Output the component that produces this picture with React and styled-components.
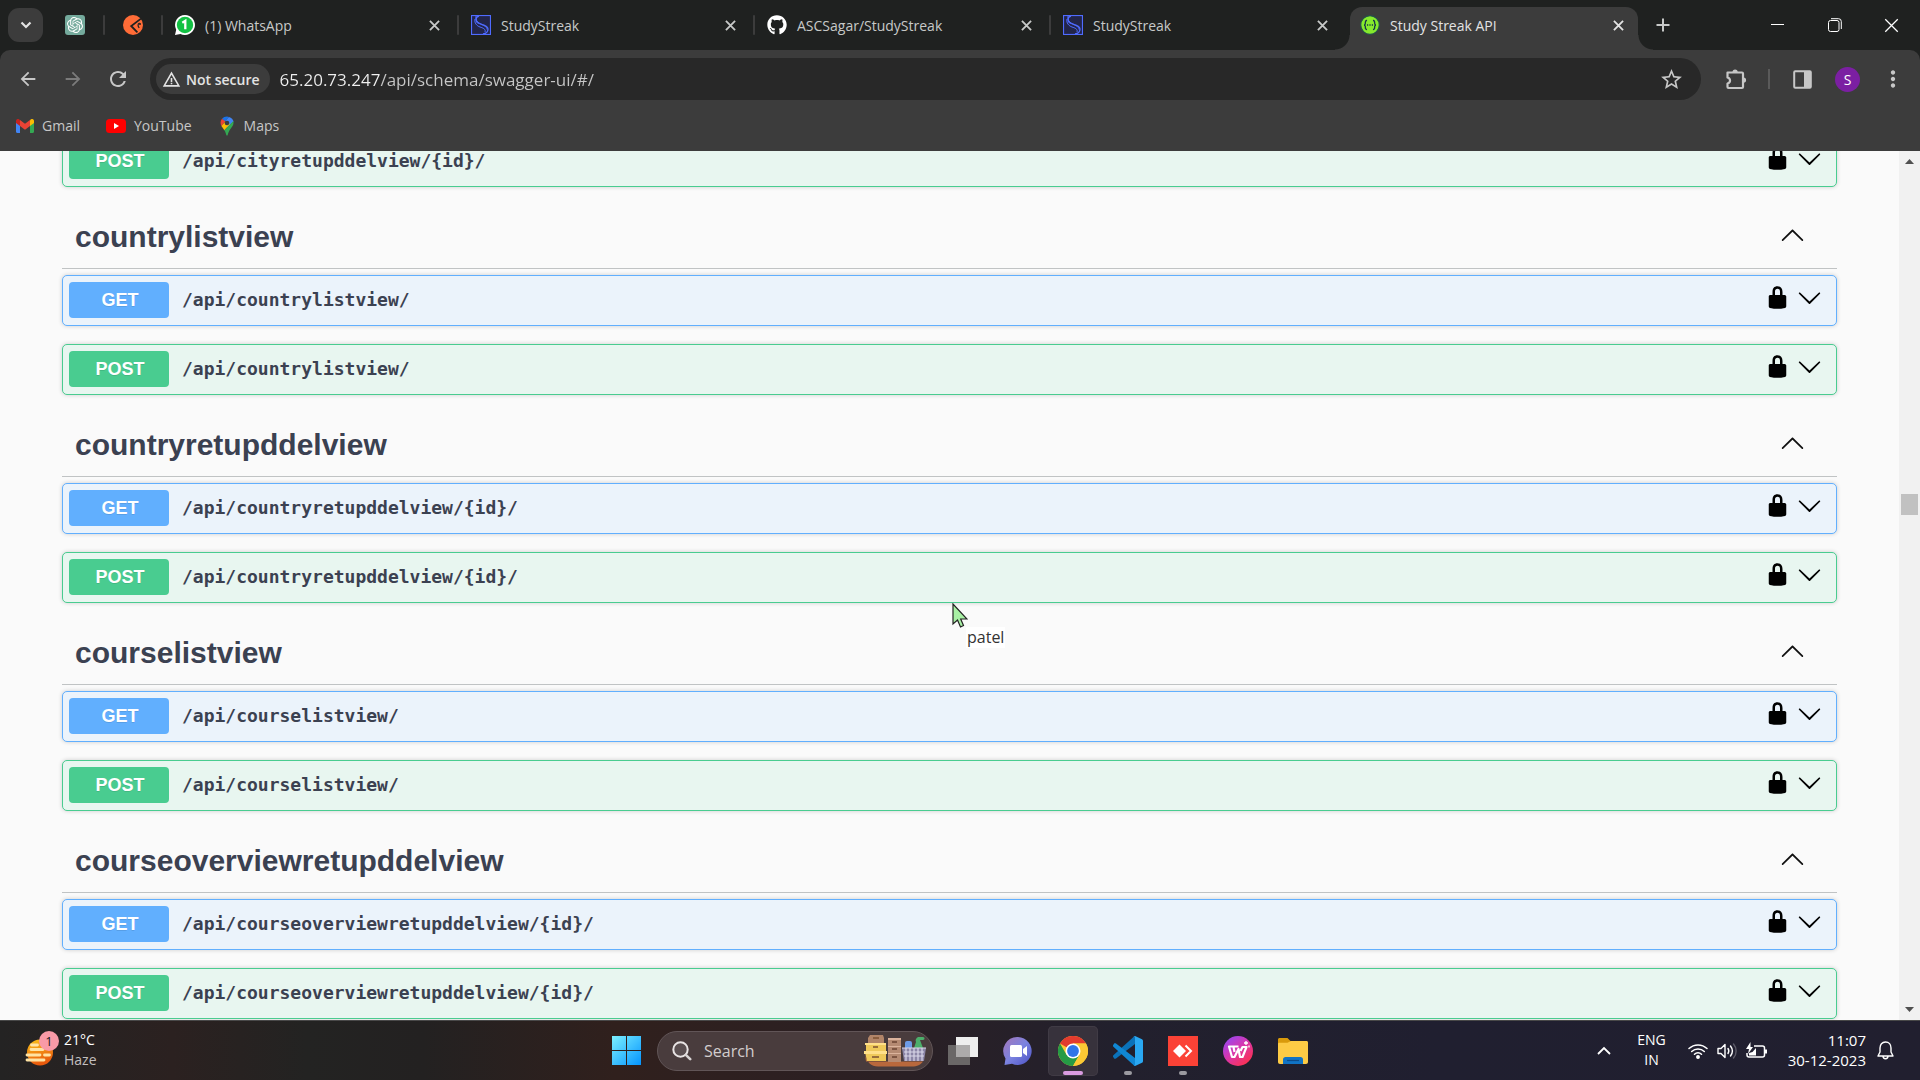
import React from 'react';
import styled, { createGlobalStyle, css } from 'styled-components';
import { FaGithub } from 'react-icons/fa';
import { SiOpenai } from 'react-icons/si';
import { MdArrowBack, MdArrowForward, MdRefresh, MdStarBorder, MdMoreVert, MdWarningAmber } from 'react-icons/md';

const UI_FONT = '"Open Sans", "Noto Sans", sans-serif';
const METHOD_COLORS = { GET: '#61affe', POST: '#49cc90' };
const METHOD_TINTS = { GET: '#ebf3fb', POST: '#e8f6f0' };

const GlobalStyle = createGlobalStyle`
  *, *::before, *::after { box-sizing: border-box; }
  body { margin: 0; overflow: hidden; background: #fafafa; font-family: ${UI_FONT}; }
  button { border: 0; padding: 0; background: none; color: inherit; font: inherit; }
  input { border: 0; padding: 0; background: none; font: inherit; outline: 0; }
  a { color: inherit; text-decoration: none; }
  svg { display: block; flex: none; }
`;

const Screen = styled.div`
  display: flex;
  flex-direction: column;
  height: 100vh;
`;

/* ---------- Browser chrome ---------- */

const TabStrip = styled.nav`
  display: flex;
  align-items: stretch;
  height: 50px;
  padding-left: 8px;
  background: #1f2120;
  color: #c7c9c8;
  font-size: 14px;
`;

const TabSearch = styled.button`
  display: grid;
  place-items: center;
  align-self: center;
  width: 35px;
  height: 34px;
  margin-right: 4px;
  border-radius: 11px;
  background: #3c3c3c;
  color: #e3e3e3;
`;

const Separator = styled.span`
  flex: none;
  align-self: center;
  width: 2px;
  height: 20px;
  border-radius: 1px;
  background: ${(p) => (p.$hidden ? 'transparent' : '#3c3c3c')};
`;

const PinnedTab = styled.button`
  display: flex;
  align-items: center;
  gap: 18px;
  padding-left: 18px;
`;

const Tab = styled.div`
  display: flex;
  align-items: center;
  flex: 0 1 296px;
  min-width: 0;
  padding-left: 12px;
  ${(p) =>
    p.$active &&
    css`
      position: relative;
      flex-basis: 288px;
      margin: 7px 0 0 3px;
      padding: 0 10px 7px;
      border-radius: 12px 12px 0 0;
      background: #3c3c3c;
      color: #e3e3e3;
      &::before,
      &::after {
        content: '';
        position: absolute;
        bottom: 0;
        width: 15px;
        height: 15px;
      }
      &::before {
        right: 100%;
        background: radial-gradient(circle at 0 0, transparent 14px, #3c3c3c 15px);
      }
      &::after {
        left: 100%;
        background: radial-gradient(circle at 100% 0, transparent 14px, #3c3c3c 15px);
      }
    `}
`;

const TabLink = styled.a`
  display: flex;
  align-items: center;
  gap: 10px;
  flex: 1;
  min-width: 0;
  white-space: nowrap;
  line-height: 20px;
`;

const TabTitle = styled.span`
  padding-top: 2px;
`;

const TabClose = styled.button`
  display: grid;
  place-items: center;
  width: 20px;
  height: 20px;
  margin-right: ${(p) => (p.$active ? 0 : 13)}px;
`;

const NewTab = styled.button`
  display: grid;
  place-items: center;
  width: 50px;
`;

const WindowControls = styled.div`
  display: flex;
  margin-left: auto;
  color: #fff;
`;

const WindowButton = styled.button`
  display: grid;
  place-items: center;
  width: 57px;
`;

const ToolbarBack = styled.div`
  background: #1f2120;
`;

const Toolbar = styled.div`
  display: flex;
  align-items: center;
  height: 58px;
  padding: 0 5px;
  border-radius: 10px 10px 0 0;
  background: #3c3c3c;
  color: #c7c7c7;
`;

const NavButton = styled.button`
  display: grid;
  place-items: center;
  width: 45px;
  height: 40px;
  color: ${(p) => (p.$dim ? '#7b7b7b' : '#c7c7c7')};
`;

const Omnibox = styled.form`
  display: flex;
  align-items: center;
  flex: 1;
  height: 42px;
  margin: 0 12px 0 10px;
  padding: 0 17px 0 6px;
  border-radius: 21px;
  background: #282828;
`;

const SecurityChip = styled.button`
  display: flex;
  align-items: center;
  gap: 5px;
  height: 30px;
  padding: 0 10px 0 6px;
  border-radius: 15px;
  background: #3c3c3c;
  color: #e3e3e3;
  font-size: 14px;
  font-weight: 600;
  white-space: nowrap;
`;

const Address = styled.input`
  flex: 1;
  min-width: 0;
  height: 30px;
  margin-left: 10px;
  color: #c7c7c7;
  font-size: 17px;
  background: linear-gradient(to right, #f0f0f0 101px, #c7c7c7 101px);
  background-clip: text;
  -webkit-text-fill-color: transparent;
`;

const ToolButton = styled.button`
  display: grid;
  place-items: center;
  width: 45px;
  height: 40px;
`;

const ToolDivider = styled.span`
  width: 2px;
  height: 20px;
  margin: 0 10px;
  background: #5a5a5a;
`;

const Avatar = styled.span`
  display: grid;
  place-items: center;
  width: 25px;
  height: 25px;
  border-radius: 50%;
  background: #7b1fa2;
  color: #fff;
  font-size: 14px;
`;

const Bookmarks = styled.nav`
  display: flex;
  align-items: center;
  gap: 26px;
  height: 43px;
  padding: 0 16px 7px;
  background: #3c3c3c;
  color: #c7c7c7;
  font-size: 14px;
`;

const Bookmark = styled.a`
  display: flex;
  align-items: center;
  gap: 8px;
  line-height: 20px;
`;

/* ---------- Page ---------- */

const Viewport = styled.div`
  display: flex;
  flex: 1;
  min-height: 0;
  overflow: hidden;
`;

const Page = styled.main`
  flex: 1;
  min-width: 0;
  padding: 0 62px;
  overflow: hidden;
  color: #3b4151;
`;

const Operations = styled.div`
  display: flex;
  flex-direction: column;
  gap: 18px;
  padding-bottom: 18px;
  ${(p) => p.$scrolled && 'margin-top: -15px;'}
`;

const SectionHeader = styled.header`
  display: flex;
  align-items: center;
  justify-content: space-between;
  height: 64px;
  margin-bottom: 6px;
  padding: 0 32px 0 13px;
  border-bottom: 1px solid #c0c3c4;
`;

const SectionTitle = styled.h3`
  margin: 0;
  font: bold 30px/36px "Liberation Sans", Arial, sans-serif;
`;

const SectionToggle = styled.button`
  padding-bottom: 4px;
  color: #111;
`;

const Operation = styled.article`
  display: flex;
  align-items: center;
  padding: 6px 14px 7px 6px;
  border: 1px solid ${(p) => METHOD_COLORS[p.$method]};
  border-radius: 5px;
  background: ${(p) => METHOD_TINTS[p.$method]};
  box-shadow: 0 0 4px rgba(0, 0, 0, 0.19);
`;

const Summary = styled.button`
  display: flex;
  align-items: center;
  gap: 13px;
  flex: 1;
  min-width: 0;
  text-align: left;
`;

const Method = styled.span`
  width: 100px;
  padding-left: 2px;
  border-radius: 4px;
  background: ${(p) => METHOD_COLORS[p.$method]};
  color: #fff;
  font: bold 18px/36px "Liberation Sans", Arial, sans-serif;
  text-align: center;
  text-shadow: 0 1px 0 rgba(0, 0, 0, 0.1);
`;

const Path = styled.span`
  font: bold 18px/36px "DejaVu Sans Mono", monospace;
`;

const Actions = styled.div`
  display: flex;
  align-self: flex-start;
  gap: 7px;
  padding-top: 3px;
  color: #000;
`;

const Scrollbar = styled.div`
  display: flex;
  flex-direction: column;
  align-items: center;
  width: 21px;
  background: #f1f1f1;
  color: #505050;
`;

const ScrollArrow = styled.button`
  display: grid;
  place-items: center;
  width: 21px;
  height: 21px;
`;

const ScrollSpace = styled.span`
  flex: ${(p) => p.$share};
`;

const ScrollThumb = styled.span`
  width: 17px;
  height: 21px;
  background: #c1c1c1;
`;

const Pointer = styled.div`
  position: absolute;
  left: 952px;
  top: 603px;
`;

const PointerName = styled.span`
  position: absolute;
  left: 14px;
  top: 24px;
  padding: 0 1px;
  background: #fff;
  color: #333;
  font-size: 16px;
  line-height: 21px;
`;

/* ---------- Taskbar ---------- */

const Taskbar = styled.footer`
  display: grid;
  grid-template-columns: 1fr auto 1fr;
  align-items: center;
  height: 60px;
  border-top: 1px solid #484848;
  background: linear-gradient(to right, #242323 0%, #2b2120 9%, #232322 16%, #232121 22%, #30201d 32%, #2b2024 46%, #22202d 58%, #201f30 75%, #211f2f 100%);
  color: #fff;
  font-size: 14px;
  line-height: 20px;
`;

const Weather = styled.button`
  display: flex;
  align-items: center;
  justify-self: start;
  gap: 4px;
  padding: 0 0 2px 24px;
  text-align: left;
`;

const WeatherText = styled.span`
  display: flex;
  flex-direction: column;
`;

const Muted = styled.span`
  color: #c2bfbf;
`;

const Apps = styled.div`
  display: flex;
  align-items: center;
  gap: 5px;
`;

const AppButton = styled.button`
  position: relative;
  display: grid;
  place-items: center;
  width: 50px;
  height: 50px;
  border-radius: 5px;
  ${(p) => p.$active && 'background: #37323c; box-shadow: inset 0 0 0 1px #403b45;'}
`;

const RunningMark = styled.span`
  position: absolute;
  bottom: 1px;
  left: 50%;
  width: ${(p) => (p.$active ? 20 : 8)}px;
  height: 4px;
  margin-left: ${(p) => (p.$active ? -10 : -4)}px;
  border-radius: 2px;
  background: ${(p) => (p.$active ? '#d99be0' : '#9b9aa0')};
`;

const SearchBox = styled.label`
  display: flex;
  align-items: center;
  gap: 12px;
  width: 276px;
  height: 40px;
  padding: 0 6px 0 14px;
  border: 1px solid #615557;
  border-radius: 20px;
  background: #493c3d;
`;

const SearchInput = styled.input`
  flex: 1;
  min-width: 0;
  font-size: 16px;
  color: #d2cdcd;
  &::placeholder { color: #d2cdcd; opacity: 1; }
`;

const Tray = styled.div`
  display: flex;
  align-items: center;
  justify-self: end;
  padding-right: 26px;
`;

const TrayButton = styled.button`
  display: flex;
  align-items: center;
  justify-content: center;
  gap: 9px;
  margin-right: ${(p) => p.$gap || 0}px;
`;

const Stack = styled.span`
  display: flex;
  flex-direction: column;
  align-items: ${(p) => (p.$clock ? 'flex-end' : 'center')};
  padding-bottom: 2px;
  font-size: ${(p) => (p.$clock ? 15 : 14)}px;
`;

/* ---------- Drawings ---------- */

const Cross = ({ size = 11, weight = 2 }) => (
  <svg width={size} height={size} viewBox="0 0 12 12" fill="none" stroke="currentColor" strokeWidth={weight}>
    <path d="M1 1l10 10M11 1L1 11" />
  </svg>
);

const ChatGptIcon = () => (
  <svg width="20" height="20" viewBox="0 0 20 20">
    <rect width="20" height="20" rx="3" fill="#74aa9c" />
    <SiOpenai x="2" y="2" size={16} color="#fff" />
  </svg>
);

const PostmanIcon = () => (
  <svg width="20" height="20" viewBox="0 0 20 20">
    <circle cx="10" cy="10" r="10" fill="#ff6c37" />
    <path d="M18 3.6L8.2 11l6.2 6.4" fill="none" stroke="#1f2120" strokeWidth="1.8" />
    <path d="M16.6 8c-2 .8-2 3-.4 5" fill="none" stroke="#1f2120" strokeWidth="1.2" />
    <circle cx="17" cy="9" r="1" fill="#1f2120" />
  </svg>
);

const WhatsAppIcon = () => (
  <svg width="20" height="20" viewBox="0 0 20 20">
    <path d="M10 0a10 10 0 1 1-4.6 18.9L0 20l1.2-5.3A10 10 0 0 1 10 0z" fill="#fff" />
    <circle cx="10" cy="10" r="8.2" fill="#12c143" />
    <path d="M7.3 7.7l3-1.9v8.4" fill="none" stroke="#fff" strokeWidth="2.3" />
  </svg>
);

const StreakIcon = () => (
  <svg width="20" height="20" viewBox="0 0 20 20" fill="none" stroke="#4f6bff">
    <rect x=".5" y=".5" width="19" height="19" fill="#22254a" strokeWidth="1.2" />
    <path d="M8 1C4 2 4 7 8 8.500c4 1.400 9 2 9 5.500 0 2.500-2 4.500-5 5" strokeWidth="1.300" />
    <path d="M4 4c-1 4 2 7 5 8s6 2 5 5M5 1c-.5 4 1 6 4 7.500s7 3 7 6" strokeWidth="1" />
  </svg>
);

const SwaggerIcon = () => (
  <svg width="20" height="20" viewBox="0 0 20 20">
    <circle cx="10" cy="10" r="9.300" fill="#85ea2d" stroke="#24504a" strokeWidth="1.200" />
    <g fill="none" stroke="#173647" strokeWidth="1.300">
      <path d="M7 5.500C4.800 5.300 5.600 8 5.200 9c-.2.700-.7 1-1.200 1 .5 0 1 .3 1.200 1 .4 1-.4 3.700 1.800 3.500M13 5.500c2.200-.2 1.400 2.500 1.800 3.500.2.700.7 1 1.200 1-.5 0-1 .3-1.200 1-.4 1 .4 3.700-1.800 3.500" />
      <path d="M7 10h1.200M9.400 10h1.200M11.800 10H13" />
    </g>
  </svg>
);

const GmailIcon = () => (
  <svg width="18" height="14" viewBox="0 0 18 14">
    <path d="M0 2v10.800c0 .7.500 1.200 1.200 1.200H4V5z" fill="#4285f4" />
    <path d="M18 2v10.800c0 .7-.5 1.200-1.200 1.200H14V5z" fill="#34a853" />
    <path d="M14 1.500V7l4-3V2c0-2-2.200-2.600-3.400-1.500z" fill="#fbbc04" />
    <path d="M4 1.500V7L0 4V2C0 0 2.200-.6 3.400.5z" fill="#c5221f" />
    <path d="M4 7V1l5 3.800L14 1v6l-5 3.800z" fill="#ea4335" />
  </svg>
);

const YouTubeIcon = () => (
  <svg width="20" height="14" viewBox="0 0 20 14">
    <rect width="20" height="14" rx="3.500" fill="#f00" />
    <path d="M8 4l5 3-5 3z" fill="#fff" />
  </svg>
);

const MapsIcon = () => (
  <svg width="18" height="20" viewBox="0 0 18 20">
    <path d="M9 .5A6.500 6.500 0 0 0 4 2.800l3 2.700L11 1z" fill="#1a73e8" />
    <path d="M4 2.800C2 5 2.300 8 3.400 10L7.500 5.500z" fill="#ea4335" />
    <path d="M11 .9c2.600.8 4 2.500 4.500 4.600L9 11.800 7.300 5z" fill="#4285f4" />
    <path d="M3.400 10c.8 1.500 2 2.700 3 4.200L12 8 7.500 5.500z" fill="#fbbc04" />
    <path d="M15.400 5c.6 3-.6 5-2.400 7.200C11 14.700 10.300 16.500 9.700 19c-.2.800-1.200.8-1.400 0-.5-2-1-3.300-2-4.800z" fill="#34a853" />
    <circle cx="9" cy="7" r="2.300" fill="#3c3c3c" />
  </svg>
);

const PuzzleIcon = () => (
  <svg width="22" height="22" viewBox="0 0 22 22">
    <path d="M2.500 4.500H17a1 1 0 0 1 1 1V19a1 1 0 0 1-1 1H3.500a1 1 0 0 1-1-1v-3.500c3.400-1 3.400-5 0-6z" fill="none" stroke="currentColor" strokeWidth="2.200" strokeLinejoin="round" />
    <path d="M7.500 4a2.600 2.600 0 0 1 5.200 0zM18.500 9.500a2.600 2.600 0 0 1 0 5.200z" fill="currentColor" />
  </svg>
);

const SidePanelIcon = () => (
  <svg width="19" height="19" viewBox="0 0 19 19">
    <rect x="1.200" y="1.200" width="16.600" height="16.600" rx="1" fill="none" stroke="currentColor" strokeWidth="2" />
    <path d="M11 1h7v17h-7z" fill="currentColor" />
  </svg>
);

const LockIcon = () => (
  <svg width="25" height="25" viewBox="0 0 20 20" fill="currentColor">
    <path d="M15.8 8H14V5.600C14 2.703 12.665 1 10 1 7.334 1 6 2.703 6 5.600V8H4c-.553 0-1 .646-1 1.199V17c0 .549.428 1.139.951 1.307l1.197.387C5.672 18.861 6.550 19 7.100 19h5.800c.549 0 1.428-.139 1.951-.307l1.196-.387c.524-.167.953-.757.953-1.306V9.199C17 8.646 16.352 8 15.800 8zM12 8H8V5.199C8 3.754 8.797 3 10 3c1.203 0 2 .754 2 2.199V8z" />
  </svg>
);

const ArrowIcon = ({ up }) => (
  <svg width="25" height="25" viewBox="0 0 20 20" fill="currentColor">
    <path
      d={
        up
          ? 'M17.418 14.908c.272.268.709.268.979 0s.271-.701 0-.969L10.490 6.109c-.270-.268-.707-.268-.979 0l-7.908 7.830c-.270.268-.270.701 0 .969.271.268.709.268.979 0L10 7.767l7.418 7.141z'
          : 'M17.418 6.109c.272-.268.709-.268.979 0s.271.701 0 .969l-7.908 7.830c-.270.268-.707.268-.979 0l-7.908-7.830c-.270-.268-.270-.701 0-.969.271-.268.709-.268.979 0L10 13.250l7.418-7.141z'
      }
    />
  </svg>
);

const WeatherIcon = () => (
  <svg width="36" height="40" viewBox="0 0 36 40">
    <defs>
      <linearGradient id="sun" x1="0" y1="0" x2="0.300" y2="1">
        <stop offset="0" stopColor="#fcc419" />
        <stop offset="1" stopColor="#e8590c" />
      </linearGradient>
    </defs>
    <circle cx="16" cy="22.500" r="13" fill="url(#sun)" />
    <path d="M7.500 15h6M7 19.500h12M3 25h13M20.500 25h5M3 30h17" stroke="#ffe3a3" strokeWidth="2.800" strokeLinecap="round" />
    <circle cx="25" cy="11" r="10" fill="#f99aa7" />
    <text x="25" y="16" textAnchor="middle" fontSize="13" fill="#1b1b1b" fontFamily="Open Sans, sans-serif">1</text>
  </svg>
);

const WindowsIcon = () => (
  <svg width="30" height="30" viewBox="0 0 30 30">
    <defs>
      <linearGradient id="win" gradientUnits="userSpaceOnUse" x1="0" y1="0" x2="30" y2="30">
        <stop offset="0" stopColor="#7cf0ff" />
        <stop offset="1" stopColor="#0091ff" />
      </linearGradient>
    </defs>
    <path d="M0 0h14v14H0zM15 0h14v14H15zM0 15h14v14H0zM15 15h14v14H15z" fill="url(#win)" />
  </svg>
);

const SearchIcon = () => (
  <svg width="20" height="20" viewBox="0 0 20 20" fill="none" strokeLinecap="round">
    <circle cx="8.500" cy="8.500" r="7.200" stroke="#e8e4e4" strokeWidth="2" fill="#5a4f51" />
    <path d="M13.800 13.800l4.400 4.400" stroke="#d8d4d4" strokeWidth="2.600" />
  </svg>
);

const StorageArt = () => (
  <svg width="62" height="32" viewBox="0 0 62 32">
    <path d="M1 20C3 27 7 31.500 14 31.500h34c5 0 9-2 11-5H2z" fill="#b9683c" />
    <path d="M4 3l2-3h13l1 3v6H4z" fill="#b08468" />
    <path d="M2 9h20v8H2zM1 17h21v9H3z" fill="#efc95a" />
    <path d="M1 8h21v2H1zM0 16h23v3H0z" fill="#ffe08a" />
    <path d="M9 3h6M9 12h5M8 22h7" stroke="#7c5030" strokeWidth="1.500" />
    <path d="M24 3h13v24H24z" fill="#b58a72" />
    <path d="M24 3h13v2H24zM24 11h13v1H24zM24 18h13v1H24z" fill="#dbb39c" />
    <path d="M28 7h5M28 14h5M28 22h5" stroke="#6a4332" strokeWidth="1.300" />
    <rect x="41" y="6" width="7" height="9" rx="2" fill="#6d9be6" />
    <path d="M52 7c-1-2 0-4 2-5h5c2 0 2 3 0 3h-3l3 8h-9z" fill="#4caf6b" />
    <path d="M38 13h24l-2 13H40z" fill="#8b85a6" />
    <path d="M38 13h24M40 17h20M40 21h20M42 13v13M46 13v13M50 13v13M54 13v13M58 13v13" stroke="#d9d6e8" strokeWidth="1.200" />
  </svg>
);

const TaskViewIcon = () => (
  <svg width="30" height="28" viewBox="0 0 30 28">
    <path d="M0 8h22v20H0z" fill="#6a6767" />
    <path d="M8 0h22v20H8z" fill="#eeeeee" />
    <path d="M8 8h14v12H8z" fill="#adabab" />
  </svg>
);

const ChatIcon = () => (
  <svg width="30" height="30" viewBox="0 0 30 30">
    <defs>
      <linearGradient id="chat" x1="0" y1="0" x2="1" y2="1">
        <stop offset="0" stopColor="#a576b8" />
        <stop offset="0.500" stopColor="#7b83e0" />
        <stop offset="1" stopColor="#4b50c4" />
      </linearGradient>
    </defs>
    <path d="M15 1a14 14 0 1 1-6 26.800L1.500 29l1-6.500A14 14 0 0 1 15 1z" fill="url(#chat)" />
    <rect x="7" y="9" width="12" height="12" rx="1.500" fill="#fff" />
    <path d="M20 13l4-3v10l-4-3z" fill="#fff" />
  </svg>
);

const ChromeIcon = () => (
  <svg width="30" height="30" viewBox="0 0 30 30">
    <circle cx="15" cy="15" r="15" fill="#fcc934" />
    <path d="M15 15L2 7.500A15 15 0 0 1 28 7.500H15z" fill="#e33b2e" />
    <path d="M2 7.500A15 15 0 0 0 15 30l6.500-11.300L15 15 8.500 18.700z" fill="#259b45" />
    <path d="M15 7.500h13A15 15 0 0 1 15 30l6.500-11.300z" fill="#fcc934" />
    <circle cx="15" cy="15" r="7.500" fill="#fff" />
    <circle cx="15" cy="15" r="5.900" fill="#2f75e8" />
  </svg>
);

const CodeIcon = () => (
  <svg width="30" height="30" viewBox="0 0 30 30">
    <path d="M22 0v8L3 22.500c-.6.500-1.400.4-1.900 0L.4 21.200c-.6-.6-.5-1.400 0-1.900L21 .5z" fill="#0b72b9" />
    <path d="M22 30v-8L3 7.500c-.6-.5-1.400-.4-1.900 0L.4 8.800c-.6.600-.5 1.400 0 1.900L21 29.500z" fill="#1087d4" />
    <path d="M22 0l7 3.200c.6.300 1 .9 1 1.600v20.400c0 .7-.4 1.300-1 1.600L22 30c-.7.200-1.400 0-2-.4.900.7 2 0 2-1V1.500c0-1-1.200-1.700-2-1 .6-.5 1.300-.7 2-.5z" fill="#2aa8f2" />
  </svg>
);

const AnyDeskIcon = () => (
  <svg width="30" height="30" viewBox="0 0 30 30">
    <path d="M0 0h30v30H0z" fill="#fb4236" />
    <path d="M11.500 8.500L18 15l-6.500 6.500L5 15z" fill="#fff" />
    <path d="M17.500 9.500L23 15l-5.500 5.500" fill="none" stroke="#fff" strokeWidth="2" />
  </svg>
);

const WpsIcon = () => (
  <svg width="30" height="30" viewBox="0 0 30 30">
    <defs>
      <linearGradient id="wps" x1="0" y1="0" x2="0.800" y2="1">
        <stop offset="0" stopColor="#8a4bff" />
        <stop offset="0.500" stopColor="#d636b0" />
        <stop offset="1" stopColor="#ff3048" />
      </linearGradient>
    </defs>
    <circle cx="15" cy="15" r="15" fill="url(#wps)" />
    <path d="M15.500 10.500H6L9 21h2.500l4-8 1.500 8h2.500l4-10h-4l-2 4M10.500 11l1 5" fill="none" stroke="#fff" strokeWidth="2.200" strokeLinejoin="round" />
    <path d="M23 5v4M21 7h4M26 9.500v2" stroke="#fff" strokeWidth="1.300" />
  </svg>
);

const FolderIcon = () => (
  <svg width="30" height="26" viewBox="0 0 30 26">
    <path d="M0 1.500C0 .7.700 0 1.500 0h8l3 3H28v8H0z" fill="#d99a0b" />
    <path d="M0 6c0-.8.500-1.300 1.300-1.300h8.200L13 3h15.500c.9 0 1.500.6 1.500 1.500V24c0 1.200-.8 2-2 2H2c-1.200 0-2-.8-2-2z" fill="#fdcb45" />
    <path d="M5 26v-4.500C5 20 6 19 7.500 19h15c1.500 0 2.500 1 2.500 2.500V26z" fill="#1173c4" />
    <path d="M9 22.500h12" stroke="#0b4b8a" strokeWidth="1.200" />
  </svg>
);

const WifiIcon = () => (
  <svg width="20" height="16" viewBox="0 0 20 16" fill="none" stroke="#fff" strokeWidth="1.500" strokeLinecap="round">
    <path d="M1 5.500a13 13 0 0 1 18 0M3.700 8.500a9 9 0 0 1 12.600 0M6.500 11.300a5 5 0 0 1 7 0" />
    <circle cx="10" cy="14" r="1.200" fill="#fff" />
  </svg>
);

const VolumeIcon = () => (
  <svg width="20" height="18" viewBox="0 0 20 18" fill="none" stroke="#fff" strokeWidth="1.400" strokeLinecap="round" strokeLinejoin="round">
    <path d="M1 6.500h3l4-4v13l-4-4H1z" />
    <path d="M11 6.500c1 1.500 1 3.500 0 5M13.500 4c2.300 3 2.300 7 0 10" />
    <path d="M16.500 2c3.500 4 3.500 10 0 14" stroke="#5d5b68" />
  </svg>
);

const BatteryIcon = () => (
  <svg width="21" height="18" viewBox="0 0 21 18">
    <path d="M8 4h8.500a2 2 0 0 1 2 2v7a2 2 0 0 1-2 2H3a2 2 0 0 1-2-2v-2" fill="none" stroke="#fff" strokeWidth="1.500" />
    <path d="M19 7.500h2v4h-2zM3 13.500V11l3.500-1L10 6v7.500zM4.500 0L0 7h3l-1 5 5-7H4.500z" fill="#fff" />
  </svg>
);

const BellIcon = () => (
  <svg width="17" height="19" viewBox="0 0 17 19" fill="none" stroke="#fff" strokeWidth="1.400" strokeLinejoin="round">
    <path d="M8.500 1C5 1 3 3.700 3 7v4l-2 4h15l-2-4V7c0-3.300-2-6-5.500-6zM6 15c0 3.700 5 3.700 5 0" />
  </svg>
);

const CursorIcon = () => (
  <svg width="16" height="26" viewBox="0 0 16 26">
    <path d="M1 1v20l4.500-4 3 7 3-1.500-2.800-6.500H15z" fill="#a8f0a4" stroke="#222" strokeWidth="1.200" />
  </svg>
);

/* ---------- Data ---------- */

const tabs = [
  { title: '(1) WhatsApp', icon: <WhatsAppIcon /> },
  { title: 'StudyStreak', icon: <StreakIcon /> },
  { title: 'ASCSagar/StudyStreak', icon: <FaGithub size={20} color="#fff" /> },
  { title: 'StudyStreak', icon: <StreakIcon />, last: true },
  { title: 'Study Streak API', icon: <SwaggerIcon />, active: true },
];

const sections = [
  { tag: 'countrylistview', path: '/api/countrylistview/' },
  { tag: 'countryretupddelview', path: '/api/countryretupddelview/{id}/' },
  { tag: 'courselistview', path: '/api/courselistview/' },
  { tag: 'courseoverviewretupddelview', path: '/api/courseoverviewretupddelview/{id}/' },
];

const apps = [
  { name: 'Task view', icon: <TaskViewIcon /> },
  { name: 'Chat', icon: <ChatIcon /> },
  { name: 'Chrome', icon: <ChromeIcon />, running: true, active: true },
  { name: 'Visual Studio Code', icon: <CodeIcon />, running: true },
  { name: 'AnyDesk', icon: <AnyDeskIcon />, running: true },
  { name: 'WPS Office', icon: <WpsIcon /> },
  { name: 'File Explorer', icon: <FolderIcon /> },
];

function OperationRow({ method, path }) {
  return (
    <Operation $method={method}>
      <Summary type="button">
        <Method $method={method}>{method}</Method>
        <Path>{path}</Path>
      </Summary>
      <Actions>
        <button type="button" aria-label="Authorize"><LockIcon /></button>
        <button type="button" aria-label="Expand operation"><ArrowIcon /></button>
      </Actions>
    </Operation>
  );
}

export default function App() {
  return (
    <Screen>
      <GlobalStyle />
      <TabStrip>
        <TabSearch aria-label="Search tabs">
          <svg width="12" height="8" viewBox="0 0 12 8" fill="none" stroke="currentColor" strokeWidth="2.200"><path d="M1.500 1.500L6 6l4.500-4.500" /></svg>
        </TabSearch>
        <PinnedTab aria-label="ChatGPT"><ChatGptIcon /><Separator /></PinnedTab>
        <PinnedTab aria-label="Postman"><PostmanIcon /><Separator /></PinnedTab>
        {tabs.map((tab, i) => (
          <Tab key={i} $active={tab.active}>
            <TabLink href="#">{tab.icon}<TabTitle>{tab.title}</TabTitle></TabLink>
            <TabClose $active={tab.active} aria-label="Close tab"><Cross /></TabClose>
            {!tab.active && <Separator $hidden={tab.last} />}
          </Tab>
        ))}
        <NewTab aria-label="New tab">
          <svg width="14" height="14" viewBox="0 0 14 14" stroke="currentColor" strokeWidth="2"><path d="M7 .5v13M.5 7h13" /></svg>
        </NewTab>
        <WindowControls>
          <WindowButton aria-label="Minimize">
            <svg width="13" height="13" viewBox="0 0 13 13"><path d="M0 5.500h13" stroke="#fff" /></svg>
          </WindowButton>
          <WindowButton aria-label="Restore">
            <svg width="14" height="14" viewBox="0 0 14 14" fill="none" stroke="#fff"><rect x=".5" y="2.500" width="10.500" height="11" rx="2" /><path d="M3 .7h7.500a2.800 2.800 0 0 1 2.800 2.800V11" /></svg>
          </WindowButton>
          <WindowButton aria-label="Close"><Cross size={15} weight={1} /></WindowButton>
        </WindowControls>
      </TabStrip>

      <ToolbarBack>
        <Toolbar>
          <NavButton aria-label="Back"><MdArrowBack size={22} /></NavButton>
          <NavButton $dim aria-label="Forward"><MdArrowForward size={22} /></NavButton>
          <NavButton aria-label="Reload"><MdRefresh size={24} /></NavButton>
          <Omnibox onSubmit={(e) => e.preventDefault()}>
            <SecurityChip type="button"><MdWarningAmber size={19} />Not secure</SecurityChip>
            <Address aria-label="Address" defaultValue="65.20.73.247/api/schema/swagger-ui/#/" spellCheck={false} />
            <button type="button" aria-label="Bookmark this page"><MdStarBorder size={25} /></button>
          </Omnibox>
          <ToolButton aria-label="Extensions"><PuzzleIcon /></ToolButton>
          <ToolDivider />
          <ToolButton aria-label="Side panel"><SidePanelIcon /></ToolButton>
          <ToolButton aria-label="Profile"><Avatar>S</Avatar></ToolButton>
          <ToolButton aria-label="Menu"><MdMoreVert size={26} /></ToolButton>
        </Toolbar>
      </ToolbarBack>
      <Bookmarks>
        <Bookmark href="#"><GmailIcon />Gmail</Bookmark>
        <Bookmark href="#"><YouTubeIcon />YouTube</Bookmark>
        <Bookmark href="#"><MapsIcon />Maps</Bookmark>
      </Bookmarks>

      <Viewport>
        <Page>
          <Operations $scrolled>
            <OperationRow method="POST" path="/api/cityretupddelview/{id}/" />
          </Operations>
          {sections.map((s) => (
            <section key={s.tag}>
              <SectionHeader>
                <SectionTitle>{s.tag}</SectionTitle>
                <SectionToggle type="button" aria-label="Collapse section"><ArrowIcon up /></SectionToggle>
              </SectionHeader>
              <Operations>
                <OperationRow method="GET" path={s.path} />
                <OperationRow method="POST" path={s.path} />
              </Operations>
            </section>
          ))}
        </Page>
        <Scrollbar>
          <ScrollArrow aria-label="Scroll up"><svg width="9" height="5" viewBox="0 0 9 5"><path d="M0 5l4.500-5L9 5z" fill="currentColor" /></svg></ScrollArrow>
          <ScrollSpace $share={322} />
          <ScrollThumb />
          <ScrollSpace $share={483} />
          <ScrollArrow aria-label="Scroll down"><svg width="9" height="5" viewBox="0 0 9 5"><path d="M0 0l4.500 5L9 0z" fill="currentColor" /></svg></ScrollArrow>
        </Scrollbar>
      </Viewport>

      <Taskbar>
        <Weather>
          <WeatherIcon />
          <WeatherText><span>21°C</span><Muted>Haze</Muted></WeatherText>
        </Weather>
        <Apps>
          <AppButton aria-label="Start"><WindowsIcon /></AppButton>
          <SearchBox>
            <SearchIcon />
            <SearchInput type="text" aria-label="Search" placeholder="Search" />
            <StorageArt />
          </SearchBox>
          {apps.map((app) => (
            <AppButton key={app.name} $active={app.active} aria-label={app.name}>
              {app.icon}
              {app.running && <RunningMark $active={app.active} />}
            </AppButton>
          ))}
        </Apps>
        <Tray>
          <TrayButton $gap={26} aria-label="Hidden icons">
            <svg width="14" height="9" viewBox="0 0 14 9" fill="none" stroke="#fff" strokeWidth="1.800"><path d="M1 8l6-6 6 6" /></svg>
          </TrayButton>
          <TrayButton $gap={22}><Stack><span>ENG</span><span>IN</span></Stack></TrayButton>
          <TrayButton $gap={21} aria-label="Network, volume and battery"><WifiIcon /><VolumeIcon /><BatteryIcon /></TrayButton>
          <TrayButton $gap={11}><Stack $clock><span>11:07</span><span>30-12-2023</span></Stack></TrayButton>
          <TrayButton aria-label="Notifications"><BellIcon /></TrayButton>
        </Tray>
      </Taskbar>

      <Pointer>
        <CursorIcon />
        <PointerName>patel</PointerName>
      </Pointer>
    </Screen>
  );
}
